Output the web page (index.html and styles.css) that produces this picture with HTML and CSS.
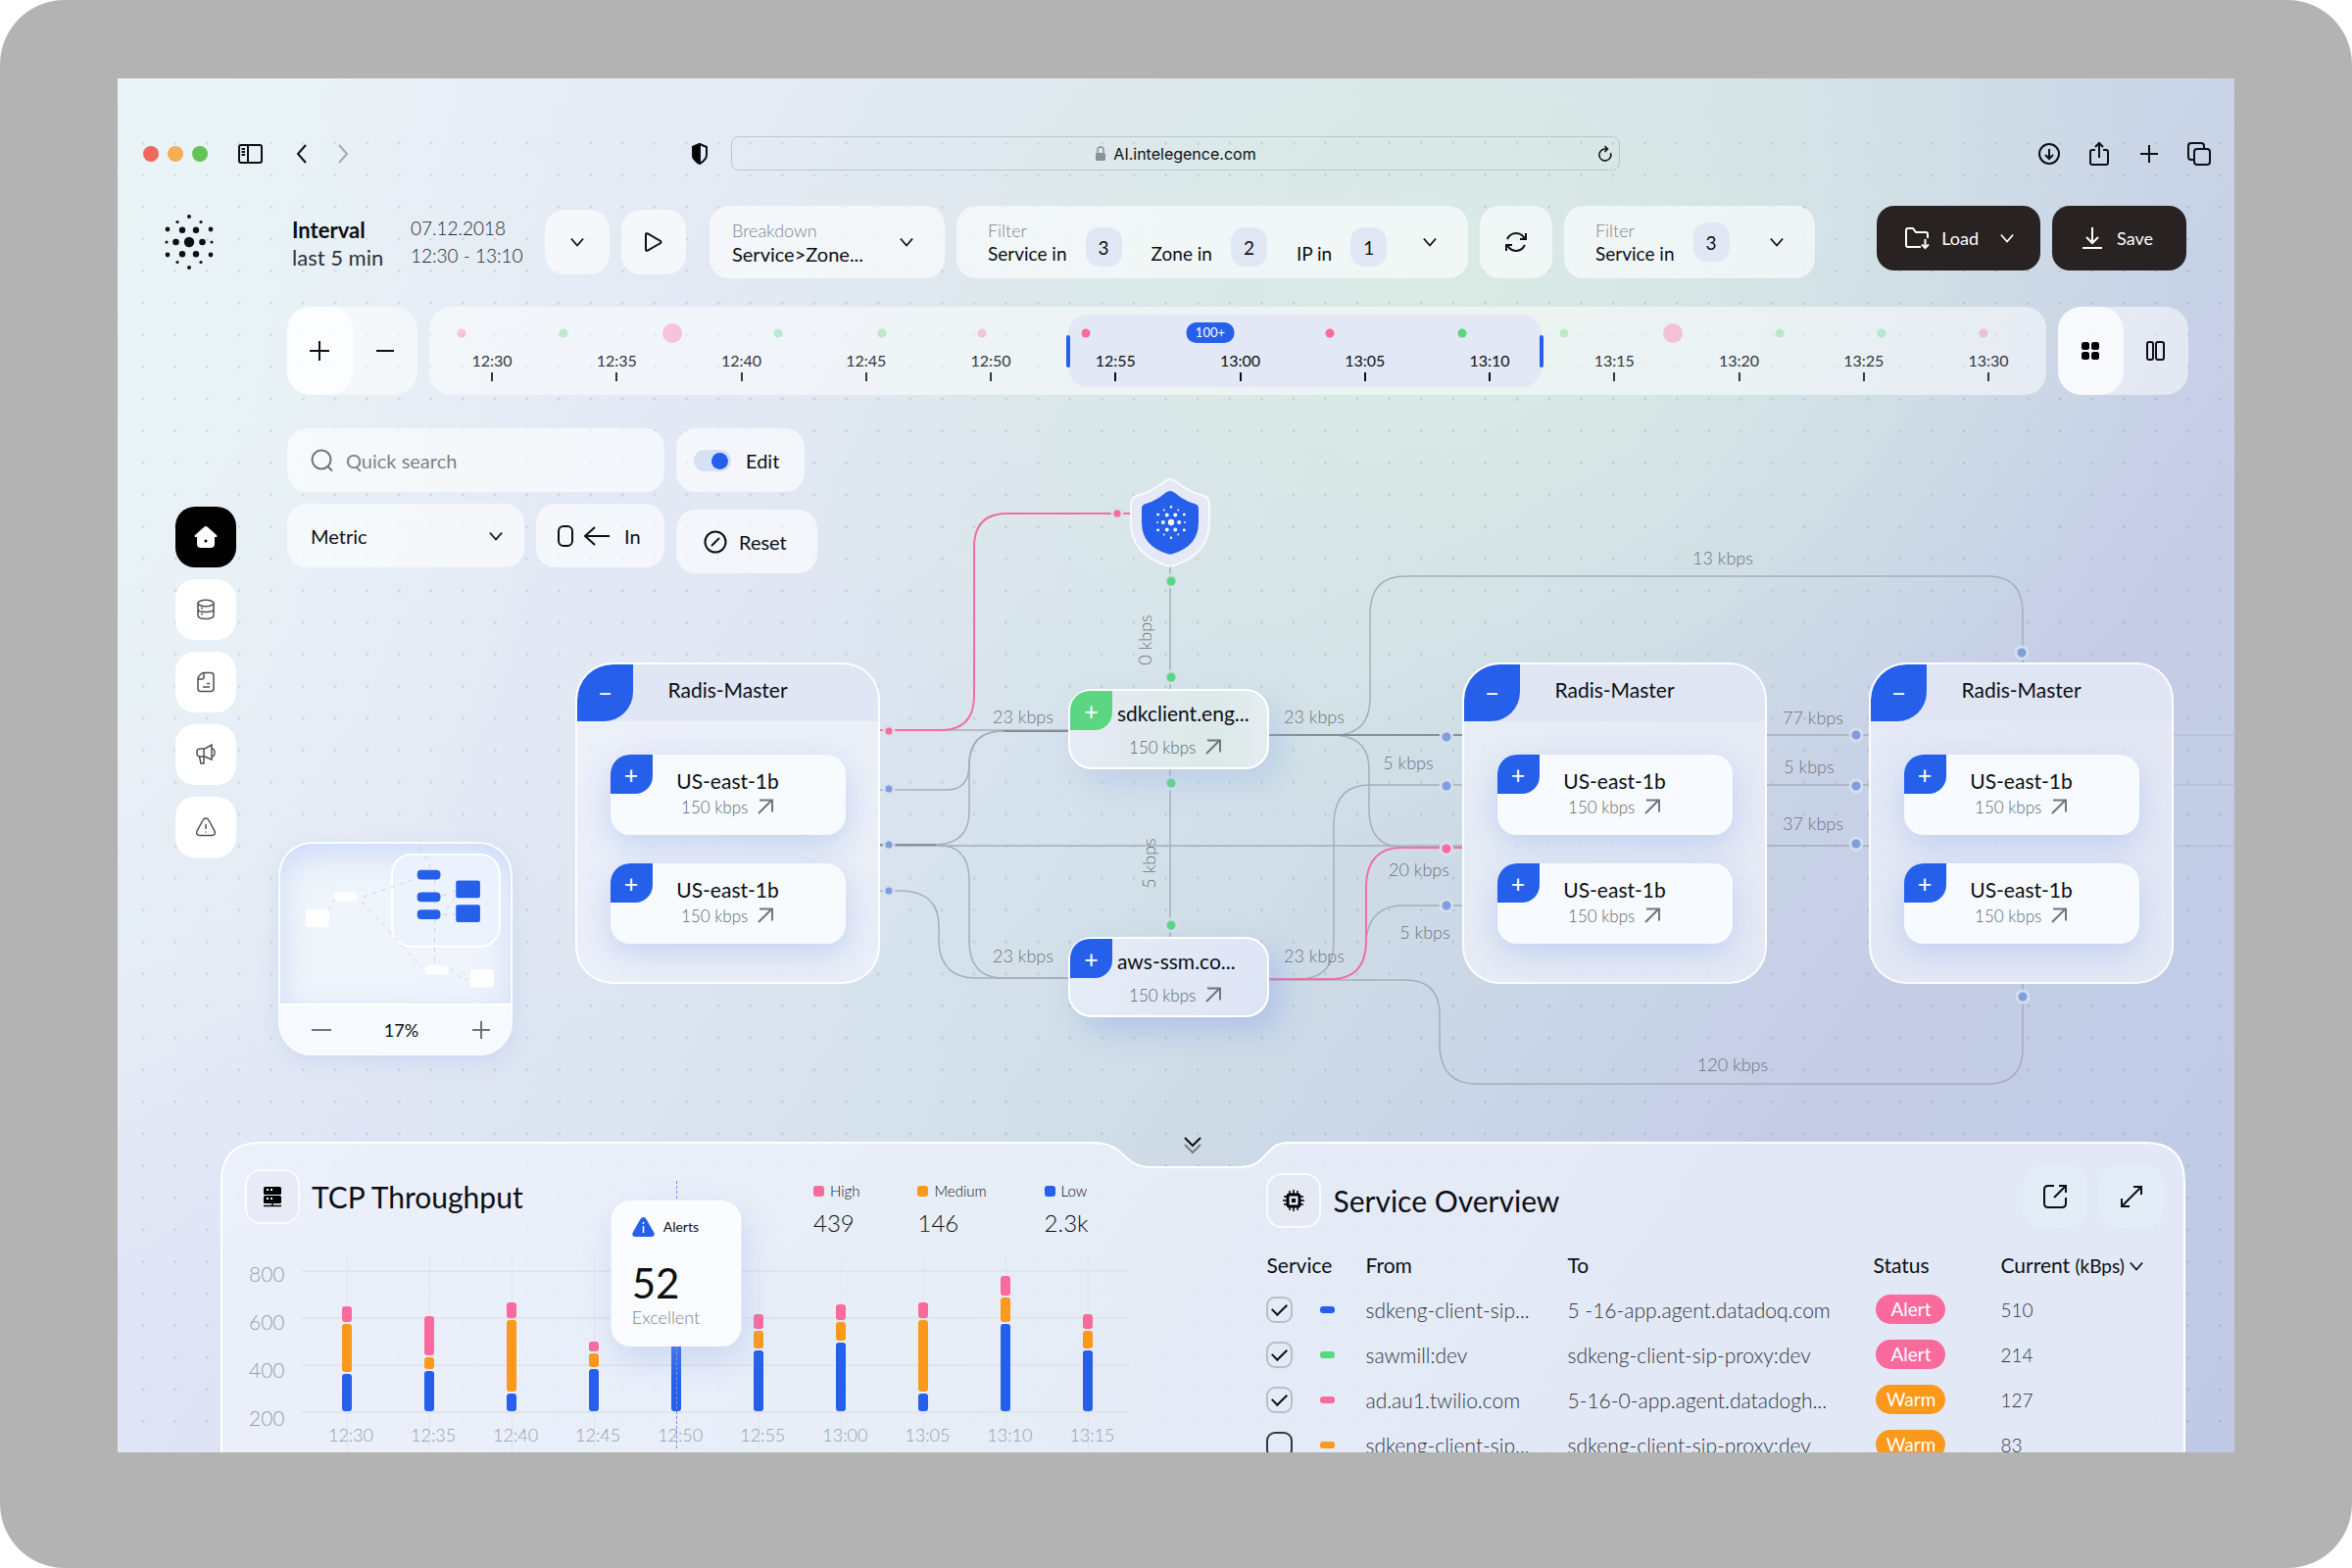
FILE: index.html
```html
<!DOCTYPE html>
<html lang="en">
  <head>
    <meta charset="UTF-8" />
    <meta name="viewport" content="width=device-width, initial-scale=1.0" />
    <title>AI Intelegence</title>
    <link rel="stylesheet" href="styles.css" />
  </head>
  <body>
    <svg class="sprite" aria-hidden="true">
      <symbol id="chevron" viewBox="0 0 16 16"><path d="M1 4l7 8 7-8" /></symbol>
      <symbol id="arrow" viewBox="0 0 18 18"><path d="M2 16L15 3M3 2.500h13v12" /></symbol>
      <symbol id="logo" viewBox="-28 -28 56 56">
        <circle r="5.200" />
        <circle cx="-13.500" r="3.300" /><circle cx="13.500" r="3.300" />
        <circle cx="-7" cy="-12.300" r="3.200" /><circle cx="7" cy="-12.300" r="3.200" />
        <circle cx="-7" cy="12.300" r="3.200" /><circle cx="7" cy="12.300" r="3.200" />
        <circle cx="-23" r="1.500" /><circle cx="23" r="1.500" />
        <circle cx="-22" cy="-13" r="2.400" /><circle cx="22" cy="-13" r="2.400" />
        <circle cx="-22" cy="13" r="2.400" /><circle cx="22" cy="13" r="2.400" />
        <circle cx="-12" cy="-20.500" r="1.600" /><circle cx="12" cy="-20.500" r="1.600" />
        <circle cx="-12" cy="20.500" r="1.600" /><circle cx="12" cy="20.500" r="1.600" />
        <circle cy="-26" r="2" /><circle cy="26" r="2" />
      </symbol>
    </svg>

    <div class="screen">
      <!-- network map -->
      <div class="canvas">
        <svg class="edges" width="2160" height="1402" viewBox="120 80 2160 1402">
          <defs>
            <pattern id="dots" x="130" y="130" width="32.6" height="32.6" patternUnits="userSpaceOnUse">
              <circle cx="16.300" cy="16.300" r="1.300" />
            </pattern>
          </defs>
          <rect class="grid-dots" x="120" y="130" width="2160" height="1352" fill="url(#dots)" />
          <g class="edge">
            <path d="M960 745H1091" />
            <path d="M897 806H966Q989 806 989 780Q990 746 1024 746H1091" />
            <path d="M897 862H955Q989 861 989 828V780Q989 746 1024 746H1091" />
            <path d="M897 862H955Q989 862 989 898V962Q990 998 1024 998H1091" />
            <path d="M897 909H922Q958 911 958 945V962Q960 998 996 998H1091" />
            <path d="M897 863H1492" />
            <path d="M1294 750H1492" />
            <path d="M1294 750H1362Q1398 750 1398 712V625Q1399 588 1434 588H2028Q2064 588 2064 625V676" />
            <path d="M1294 750H1362Q1397 752 1397 785V830Q1399 864 1430 864" />
            <path d="M1330 999Q1361 996 1361 962V838Q1363 801 1398 801H1492" />
            <path d="M1394 958Q1398 924 1432 924H1492" />
            <path d="M1294 1000H1434Q1469 1000 1469 1036V1070Q1472 1106 1506 1106H2028Q2064 1106 2064 1070V1004" />
            <path d="M1803 750H1907M1803 801H1907M1803 863H1907" />
            <path d="M1194 578V704M1194 784V958" />
          </g>
          <path class="edge faint" d="M2217 750H2280M2217 801H2280M2217 863H2280" />
          <path class="edge trunk" d="M1024 746H1091M897 862H955M1294 750H1362H1492" />
          <g class="edge hot">
            <path d="M897 745H960Q994 745 994 710V558Q994 524 1028 524H1154" />
            <path d="M1294 999H1358Q1394 999 1394 960V902Q1396 865 1430 865H1492" />
          </g>
          <g class="pin">
            <circle cx="907" cy="805" r="5" /><circle cx="907" cy="862" r="5" /><circle cx="907" cy="909" r="5" />
            <circle cx="1476" cy="752" r="6" /><circle cx="1476" cy="802" r="6" /><circle cx="1476" cy="924" r="6" />
            <circle cx="1894" cy="750" r="6" /><circle cx="1894" cy="802" r="6" /><circle cx="1894" cy="861" r="6" />
            <circle cx="2063" cy="666" r="6" /><circle cx="2064" cy="1017" r="6" />
          </g>
          <g class="pin pink">
            <circle cx="907" cy="746" r="5" /><circle cx="1140" cy="524" r="5" /><circle cx="1476" cy="866" r="6" />
          </g>
          <g class="pin green">
            <circle cx="1195" cy="593" r="6" /><circle cx="1195" cy="691" r="6" />
            <circle cx="1195" cy="799" r="6" /><circle cx="1195" cy="944" r="6" />
          </g>
          <g class="rate">
            <text x="1044" y="738">23 kbps</text>
            <text x="1341" y="738">23 kbps</text>
            <text x="1044" y="982">23 kbps</text>
            <text x="1341" y="982">23 kbps</text>
            <text x="1437" y="785">5 kbps</text>
            <text x="1448" y="894">20 kbps</text>
            <text x="1454" y="958">5 kbps</text>
            <text x="1850" y="739">77 kbps</text>
            <text x="1846" y="789">5 kbps</text>
            <text x="1850" y="847">37 kbps</text>
            <text x="1758" y="576">13 kbps</text>
            <text x="1768" y="1093">120 kbps</text>
            <text transform="translate(1175 653) rotate(-90)">0 kbps</text>
            <text transform="translate(1179 881) rotate(-90)">5 kbps</text>
          </g>
          <g transform="translate(1194 533)">
            <path class="shield-rim" d="M0-44Q3-44 8-40Q20-31 34-27Q40-25 40-19V0Q40 32 4 44Q0 45-4 44Q-40 32-40 0V-19Q-40-25-34-27Q-20-31-8-40Q-3-44 0-44Z" />
            <path class="shield" d="M0-32Q2-32 5-30Q14-22 25-19Q29-18 29-14V0Q29 24 3 32Q0 33-3 32Q-29 24-29 0V-14Q-29-18-25-19Q-14-22-5-30Q-2-32 0-32Z" />
            <use href="#logo" x="-16" y="-17" width="34" height="34" fill="#fff" />
          </g>
        </svg>

        <article class="group group-a">
          <header><button class="corner" aria-label="Collapse">−</button><h3>Radis-Master</h3></header>
          <div class="zone">
            <button class="corner" aria-label="Expand">+</button>
            <h4>US-east-1b</h4>
            <p>150 kbps <svg class="ico"><use href="#arrow" /></svg></p>
          </div>
          <div class="zone">
            <button class="corner" aria-label="Expand">+</button>
            <h4>US-east-1b</h4>
            <p>150 kbps <svg class="ico"><use href="#arrow" /></svg></p>
          </div>
        </article>
        <article class="group group-b">
          <header><button class="corner" aria-label="Collapse">−</button><h3>Radis-Master</h3></header>
          <div class="zone">
            <button class="corner" aria-label="Expand">+</button>
            <h4>US-east-1b</h4>
            <p>150 kbps <svg class="ico"><use href="#arrow" /></svg></p>
          </div>
          <div class="zone">
            <button class="corner" aria-label="Expand">+</button>
            <h4>US-east-1b</h4>
            <p>150 kbps <svg class="ico"><use href="#arrow" /></svg></p>
          </div>
        </article>
        <article class="group group-c">
          <header><button class="corner" aria-label="Collapse">−</button><h3>Radis-Master</h3></header>
          <div class="zone">
            <button class="corner" aria-label="Expand">+</button>
            <h4>US-east-1b</h4>
            <p>150 kbps <svg class="ico"><use href="#arrow" /></svg></p>
          </div>
          <div class="zone">
            <button class="corner" aria-label="Expand">+</button>
            <h4>US-east-1b</h4>
            <p>150 kbps <svg class="ico"><use href="#arrow" /></svg></p>
          </div>
        </article>
        <article class="zone node node-sdk">
          <button class="corner green" aria-label="Expand">+</button>
          <h4>sdkclient.eng...</h4>
          <p>150 kbps <svg class="ico"><use href="#arrow" /></svg></p>
        </article>
        <article class="zone node node-aws">
          <button class="corner" aria-label="Expand">+</button>
          <h4>aws-ssm.co...</h4>
          <p>150 kbps <svg class="ico"><use href="#arrow" /></svg></p>
        </article>
      </div>

      <!-- browser bar -->
      <div class="browser">
        <div class="lights"><i></i><i></i><i></i></div>
        <button class="plain" aria-label="Sidebar">
          <svg width="26" height="22" viewBox="0 0 26 22"><rect x="1" y="2" width="23" height="18" rx="2" /><path d="M10 2v18M3.500 6h3.500M3.500 9h3.500M3.500 12h3.500" /></svg>
        </button>
        <button class="plain back" aria-label="Back"><svg width="12" height="20" viewBox="0 0 12 20"><path d="M10 1L2 10l8 9" /></svg></button>
        <button class="plain forward" aria-label="Forward"><svg width="12" height="20" viewBox="0 0 12 20"><path d="M2 1l8 9-8 9" /></svg></button>
        <svg class="privacy" width="18" height="22" viewBox="0 0 18 22"><path d="M9 1l7 3v8q0 5-7 9-7-4-7-9V4z" /><path d="M9 1L2 4v8q0 5 7 9z" fill="#000" /></svg>
        <div class="url">
          <svg width="12" height="16" viewBox="0 0 12 16"><path d="M3 7V4q0-3 3-3t3 3v3" fill="none" stroke="#8b9199" stroke-width="1.500" /><rect x="1" y="7" width="10" height="8" rx="1.500" fill="#8b9199" /></svg>
          <span>AI.intelegence.com</span>
          <button class="plain reload" aria-label="Reload"><svg width="16" height="18" viewBox="0 0 16 18"><path d="M13.500 8A6 6 0 1 1 8 4h2M7.500 1l3 3-3 3" stroke-width="1.500" /></svg></button>
        </div>
        <div class="browser-actions">
          <button class="plain" aria-label="Downloads"><svg width="24" height="24" viewBox="0 0 24 24"><circle cx="12" cy="12" r="10" /><path d="M12 7v10M8 13l4 4 4-4" /></svg></button>
          <button class="plain" aria-label="Share"><svg width="24" height="26" viewBox="0 0 24 26"><path d="M8 9H5q-2 0-2 2v11q0 2 2 2h14q2 0 2-2V11q0-2-2-2h-3M12 17V2M8 6l4-4 4 4" /></svg></button>
          <button class="plain" aria-label="New tab"><svg width="24" height="24" viewBox="0 0 24 24"><path d="M12 3v18M3 12h18" /></svg></button>
          <button class="plain" aria-label="Tabs"><svg width="24" height="24" viewBox="0 0 24 24"><rect x="7" y="7" width="16" height="16" rx="3" /><path d="M7 18H4q-3 0-3-3V4q0-3 3-3h10q3 0 3 3v3" /></svg></button>
        </div>
      </div>

      <!-- toolbar -->
      <div class="toolbar">
        <a class="logo" href="#" aria-label="Home"><svg width="56" height="56"><use href="#logo" /></svg></a>
        <div class="interval"><b>Interval</b><span>last 5 min</span></div>
        <div class="dates"><span>07.12.2018</span><span>12:30 - 13:10</span></div>
        <button class="tile small" aria-label="Choose interval"><svg class="chev"><use href="#chevron" /></svg></button>
        <button class="tile small" aria-label="Play"><svg width="22" height="22" viewBox="0 0 22 22"><path d="M3 3.500v15q0 2 2 1l13-7.500q1-1 0-2L5 2.500q-2-1-2 1z" /></svg></button>
        <div class="tile breakdown">
          <div class="field">
            <label for="breakdown">Breakdown</label>
            <select id="breakdown"><option>Service&gt;Zone...</option></select>
          </div>
          <svg class="chev"><use href="#chevron" /></svg>
        </div>
        <button class="tile filter filter-main">
          <span class="field"><small>Filter</small><span>Service in</span></span><span class="count">3</span>
          <span class="field second"><span>Zone in</span></span><span class="count">2</span>
          <span class="field second"><span>IP in</span></span><span class="count">1</span>
          <svg class="chev"><use href="#chevron" /></svg>
        </button>
        <button class="tile refresh" aria-label="Refresh"><svg width="28" height="24" viewBox="0 0 28 24"><path d="M5 9Q8 3 14 3q6 0 9 6M24 3v6h-6M23 15q-3 6-9 6-6 0-9-6M4 21v-6h6" /></svg></button>
        <button class="tile filter filter-side">
          <span class="field"><small>Filter</small><span>Service in</span></span><span class="count high">3</span>
          <svg class="chev"><use href="#chevron" /></svg>
        </button>
        <button class="dark load">
          <svg width="26" height="24" viewBox="0 0 26 24"><path d="M17 21H4q-2 0-2-2V4q0-2 2-2h5l3 4h10q2 0 2 2v4M21.500 13v9M18 18.500l3.500 3.500 3.500-3.500" /></svg>
          Load
          <svg class="chev"><use href="#chevron" /></svg>
        </button>
        <button class="dark">
          <svg width="22" height="24" viewBox="0 0 22 24"><path d="M11 1v15M5 11l6 6 6-6M1 22h20" /></svg>
          Save
        </button>
      </div>

      <!-- timeline -->
      <div class="timeline-row">
        <div class="switch">
          <button class="on" aria-label="Zoom in"><svg width="22" height="22" viewBox="0 0 22 22"><path d="M11 1v20M1 11h20" /></svg></button>
          <button aria-label="Zoom out"><svg width="22" height="22" viewBox="0 0 22 22"><path d="M2 11h18" /></svg></button>
        </div>
        <div class="timeline">
          <div class="selection"></div>
          <i class="event pink" style="left: 2%"></i>
          <i class="event green" style="left: 8.3%"></i>
          <i class="event pink big" style="left: 15%"></i>
          <i class="event green" style="left: 21.6%"></i>
          <i class="event green" style="left: 28%"></i>
          <i class="event pink" style="left: 34.2%"></i>
          <i class="event pink live" style="left: 40.6%"></i>
          <span class="more" style="left: 48.3%">100+</span>
          <i class="event pink live" style="left: 55.7%"></i>
          <i class="event green live" style="left: 63.9%"></i>
          <i class="event green" style="left: 70.2%"></i>
          <i class="event pink big" style="left: 76.9%"></i>
          <i class="event green" style="left: 83.5%"></i>
          <i class="event green" style="left: 89.8%"></i>
          <i class="event pink" style="left: 96.1%"></i>
          <ol class="ticks">
            <li>12:30</li><li>12:35</li><li>12:40</li><li>12:45</li><li>12:50</li>
            <li class="in">12:55</li><li class="in">13:00</li><li class="in">13:05</li><li class="in">13:10</li>
            <li>13:15</li><li>13:20</li><li>13:25</li><li>13:30</li>
          </ol>
        </div>
        <div class="switch">
          <button class="on" aria-label="Grid view"><svg class="solid" width="20" height="20" viewBox="0 0 20 20"><rect x="1" y="1" width="8" height="8" rx="2.500" /><rect x="11" y="1" width="8" height="8" rx="2.500" /><rect x="1" y="11" width="8" height="8" rx="2.500" /><rect x="11" y="11" width="8" height="8" rx="2.500" /></svg></button>
          <button aria-label="Column view"><svg width="20" height="20" viewBox="0 0 20 20"><rect x="1" y="1" width="6" height="18" rx="2" /><rect x="10" y="1" width="8" height="18" rx="2" /></svg></button>
        </div>
      </div>

      <div class="workspace">
        <nav class="side">
          <a class="active" href="#" aria-label="Home"><svg width="26" height="26" viewBox="0 0 26 26"><path d="M13 2q1 0 2 1l9 8q1 1 0 2h-2v7q0 4-4 4H8q-4 0-4-4v-7H2q-1-1 0-2l9-8q1-1 2-1z" fill="#fff" stroke="none" /><circle cx="13" cy="17" r="1.500" fill="#000" stroke="none" /></svg></a>
          <a href="#" aria-label="Data"><svg width="22" height="22" viewBox="0 0 22 22"><ellipse cx="11" cy="4.500" rx="8" ry="3.200" /><path d="M3 4.500v12q0 4 8 4t8-4v-12M3 10.500q0 3 8 3t8-3M6 9.500h2M6 15.500h2" /></svg></a>
          <a href="#" aria-label="Reports"><svg width="22" height="22" viewBox="0 0 22 22"><path d="M9 1.500h7q3 0 3 3v13q0 3-3 3H6q-3 0-3-3V8q0-3 3-5 1-1.500 3-1.500zM9 2v4q0 2-2 2H3M8 16h7M12 12.500h3" /></svg></a>
          <a href="#" aria-label="Announcements"><svg width="22" height="22" viewBox="0 0 22 22"><path d="M2 8q0-3 4-3h4l7-4v15l-7-3H6q-4 0-4-3zM9 5v8M17 5q3 0 3 4t-3 4M4.500 13l1.500 7h3v-7" /></svg></a>
          <a href="#" aria-label="Alerts"><svg width="22" height="22" viewBox="0 0 22 22"><path d="M11 2q2 0 3 2l6 11q1.500 4.500-3 4.500H5q-4.500 0-3-4.500L8 4q1-2 3-2zM11 8v5M11 15.500v1" /></svg></a>
        </nav>
        <div class="left-tools">
          <div class="tools">
            <div class="tools-col">
              <label class="tile search"><svg width="24" height="24" viewBox="0 0 24 24"><circle cx="11" cy="11" r="9.500" /><path d="M17 17.500l5 5" /></svg><input type="search" placeholder="Quick search" aria-label="Quick search" /></label>
              <div class="tools-line">
                <div class="tile metric">
                  <select aria-label="Metric"><option>Metric</option></select>
                  <svg class="chev"><use href="#chevron" /></svg>
                </div>
                <button class="tile direction"><svg width="54" height="24" viewBox="0 0 54 24"><rect x="1" y="2" width="14" height="20" rx="5" /><path d="M53 12H29M38 3l-10 9 10 9" /></svg>In</button>
              </div>
            </div>
            <div class="tools-col wide">
              <label class="tile edit"><input type="checkbox" checked /><span>Edit</span></label>
              <button class="tile reset"><svg width="24" height="24" viewBox="0 0 24 24"><circle cx="12" cy="12" r="10.500" /><path d="M8 16l8-8" /></svg>Reset</button>
            </div>
          </div>

          <div class="minimap">
            <svg width="237" height="165" viewBox="285 861 237 165">
              <rect class="lens" x="400" y="872" width="111" height="95" rx="20" />
              <path class="wires" d="M429 864l12 24M422 898l-52 18M334 930l8-14M369 921l62 68M444 898v88M460 989q8 12 18 12M452 915l14-6M452 934h14M456 929l12-16" />
              <g fill="#2660ea"><rect x="426" y="888" width="24" height="10" rx="4" /><rect x="426" y="911" width="24" height="10" rx="4" /><rect x="426" y="929" width="24" height="10" rx="4" /><rect x="466" y="899" width="25" height="18" rx="2" /><rect x="466" y="924" width="25" height="18" rx="2" /></g>
              <g fill="#fff"><rect x="340" y="911" width="24" height="9" rx="4" /><rect x="311" y="929" width="24" height="18" rx="2" /><rect x="434" y="987" width="24" height="9" rx="4" /><rect x="481" y="991" width="24" height="18" rx="2" /></g>
            </svg>
            <div class="zoom-bar">
              <button aria-label="Zoom out"><svg width="20" height="20" viewBox="0 0 20 20"><path d="M0 10h20" /></svg></button>
              <span>17%</span>
              <button aria-label="Zoom in"><svg width="20" height="20" viewBox="0 0 20 20"><path d="M10 1v18M1 10h18" /></svg></button>
            </div>
          </div>
        </div>
      </div>

      <!-- bottom sheet -->
      <div class="sheet">
        <svg class="sheet-bg" viewBox="0 0 2006 360" preserveAspectRatio="none">
          <path d="M1 370V41Q1 1 41 1H890C925 1 920 26 950 26H1040C1070 26 1065 1 1090 1H1965Q2005 1 2005 41V370" />
        </svg>
        <button class="pull" aria-label="Collapse panel"><svg width="20" height="20" viewBox="0 0 20 20"><path d="M2 2l8 8 8-8" /><path d="M2 9l8 8 8-8" opacity=".45" /></svg></button>

        <section class="throughput">
          <header>
            <h2><span class="badge"><svg class="solid" width="22" height="22" viewBox="0 0 22 22"><rect x="2" y="1" width="18" height="8" rx="1.500" /><rect x="2" y="10" width="18" height="8" rx="1.500" /><path d="M2 20.500h18M11 18v3" stroke="#000" stroke-width="1.500" /><path d="M5 4h2M9 4h2M5 13h2M9 13h2" stroke="#fff" stroke-width="2" /></svg></span>TCP Throughput</h2>
            <dl class="legend">
              <div><dt class="high">High</dt><dd>439</dd></div>
              <div><dt class="medium">Medium</dt><dd>146</dd></div>
              <div><dt class="low">Low</dt><dd>2.3k</dd></div>
            </dl>
          </header>
          <div class="chart">
            <div class="y-axis"><span>800</span><span>600</span><span>400</span><span>200</span></div>
            <div class="plot">
              <div class="col"><div class="bar"><i class="high" style="height: 16px"></i><i class="medium" style="height: 49px"></i><i class="low" style="height: 38px"></i></div><span>12:30</span></div>
              <div class="col"><div class="bar"><i class="high" style="height: 40px"></i><i class="medium" style="height: 12px"></i><i class="low" style="height: 41px"></i></div><span>12:35</span></div>
              <div class="col"><div class="bar"><i class="high" style="height: 16px"></i><i class="medium" style="height: 73px"></i><i class="low" style="height: 18px"></i></div><span>12:40</span></div>
              <div class="col"><div class="bar"><i class="high" style="height: 10px"></i><i class="medium" style="height: 14px"></i><i class="low" style="height: 43px"></i></div><span>12:45</span></div>
              <div class="col current">
                <div class="bar"><i class="low" style="height: 78px"></i></div><span>12:50</span>
                <div class="tip">
                  <p><svg width="24" height="22" viewBox="0 0 24 22"><path d="M12 1q2 0 3 2l8 14q1 4-3 4H4q-4 0-3-4L9 3q1-2 3-2z" fill="#2660ea" /><path d="M12 6v2M12 10v7" stroke="#fff" stroke-width="1.500" /></svg>Alerts</p>
                  <strong>52</strong>
                  <small>Excellent</small>
                </div>
              </div>
              <div class="col"><div class="bar"><i class="high" style="height: 15px"></i><i class="medium" style="height: 18px"></i><i class="low" style="height: 62px"></i></div><span>12:55</span></div>
              <div class="col"><div class="bar"><i class="high" style="height: 16px"></i><i class="medium" style="height: 19px"></i><i class="low" style="height: 70px"></i></div><span>13:00</span></div>
              <div class="col"><div class="bar"><i class="high" style="height: 16px"></i><i class="medium" style="height: 73px"></i><i class="low" style="height: 18px"></i></div><span>13:05</span></div>
              <div class="col"><div class="bar"><i class="high" style="height: 20px"></i><i class="medium" style="height: 25px"></i><i class="low" style="height: 89px"></i></div><span>13:10</span></div>
              <div class="col"><div class="bar"><i class="high" style="height: 15px"></i><i class="medium" style="height: 18px"></i><i class="low" style="height: 62px"></i></div><span>13:15</span></div>
            </div>
          </div>
        </section>

        <section class="overview">
          <header>
            <h2><span class="badge"><svg width="22" height="22" viewBox="0 0 22 22"><g stroke="#000"><rect x="5" y="5" width="12" height="12" rx="2" stroke-width="3" /><rect x="9.500" y="9.500" width="3" height="3" fill="#000" /><path d="M7 1v4M11 0v5M15 1v4M7 17v4M11 17v5M15 17v4M1 7h4M0 11h5M1 15h4M17 7h4M17 11h5M17 15h4" stroke-width="1.500" /></g></svg></span>Service Overview</h2>
            <div class="overview-actions">
              <button aria-label="Open"><svg width="26" height="26" viewBox="0 0 26 26"><path d="M12 2H6Q2 2 2 6v14q0 4 4 4h14q4 0 4-4v-6M12 14L24 2M17 2h7v7" /></svg></button>
              <button aria-label="Full screen"><svg width="24" height="24" viewBox="0 0 24 24"><path d="M2 22L22 2M14 2h8v8M2 14v8h8" /></svg></button>
            </div>
          </header>
          <table>
            <thead>
              <tr><th class="c-service">Service</th><th class="c-from">From</th><th class="c-to">To</th><th class="c-status">Status</th><th>Current <small>(kBps)</small> <svg class="chev"><use href="#chevron" /></svg></th></tr>
            </thead>
            <tbody>
              <tr><td><label class="pick"><input type="checkbox" aria-label="sdkeng-client-sip" checked /><i class="low"></i></label></td><td>sdkeng-client-sip...</td><td>5 -16-app.agent.datadoq.com</td><td><span class="pill alert">Alert</span></td><td class="num">510</td></tr>
              <tr><td><label class="pick"><input type="checkbox" aria-label="sawmill:dev" checked /><i class="ok"></i></label></td><td>sawmill:dev</td><td>sdkeng-client-sip-proxy:dev</td><td><span class="pill alert">Alert</span></td><td class="num">214</td></tr>
              <tr><td><label class="pick"><input type="checkbox" aria-label="ad.au1.twilio.com" checked /><i class="high"></i></label></td><td>ad.au1.twilio.com</td><td>5-16-0-app.agent.datadogh...</td><td><span class="pill warm">Warm</span></td><td class="num">127</td></tr>
              <tr><td><label class="pick"><input type="checkbox" aria-label="sdkeng-client-sip" /><i class="medium"></i></label></td><td>sdkeng-client-sip...</td><td>sdkeng-client-sip-proxy:dev</td><td><span class="pill warm">Warm</span></td><td class="num">83</td></tr>
            </tbody>
          </table>
        </section>
      </div>
    </div>
  </body>
</html>
```

FILE: styles.css
```css
* {
  margin: 0;
  padding: 0;
  box-sizing: border-box;
}

html {
  background: #fff;
}

body {
  height: 100vh;
  padding: 80px 120px 118px;
  background: #b3b3b3;
  border-radius: 66px;
  overflow: hidden;
  font-family: Lato, "Open Sans", sans-serif;
  font-size: 20px;
  color: #0c0f14;
}

button,
input,
select {
  font: inherit;
  color: inherit;
  border: none;
  background: none;
}

button {
  cursor: pointer;
}

svg {
  flex: none;
  fill: none;
  stroke: none;
}

ol {
  list-style: none;
}

.sprite {
  position: absolute;
  width: 0;
  height: 0;
}

.screen {
  position: relative;
  height: 100%;
  overflow: hidden;
  display: flex;
  flex-direction: column;
  background:
    radial-gradient(ellipse 760px 560px at 62% 16%, rgba(218, 235, 228, 0.95), rgba(218, 235, 228, 0) 100%),
    radial-gradient(ellipse 460px 1100px at 0% 10%, rgba(234, 244, 245, 0.9), rgba(234, 244, 245, 0) 100%),
    radial-gradient(ellipse 900px 600px at 10% 100%, rgba(221, 227, 246, 0.9), rgba(221, 227, 246, 0) 100%),
    linear-gradient(125deg, #e8f1f6 0%, #e2e8f4 30%, #d0dfe7 54%, #c5cde6 78%, #c0cae6 100%);
}

.chev {
  width: 14px;
  height: 14px;
  stroke: currentColor;
  stroke-width: 2;
}

/* browser bar */
.browser {
  position: relative;
  flex: none;
  display: flex;
  align-items: center;
  height: 35px;
  margin-top: 59px;
  padding: 0 24px 0 26px;
}

.lights {
  display: flex;
  gap: 9px;
  margin-right: 31px;
}

.lights i {
  width: 16px;
  height: 16px;
  border-radius: 50%;
  background: #ec6a5f;
}

.lights i:nth-child(2) {
  background: #f4ae55;
}

.lights i:nth-child(3) {
  background: #62c454;
}

.plain {
  display: flex;
}

.plain svg,
.privacy {
  stroke: #0c0f14;
  stroke-width: 2;
}

.back {
  margin-left: 33px;
}

.forward {
  margin-left: 30px;
  opacity: 0.3;
}

.privacy {
  margin-left: 349px;
}

.url {
  position: relative;
  flex: 1;
  display: flex;
  align-items: center;
  justify-content: center;
  gap: 7px;
  height: 35px;
  margin: 0 603px 0 23px;
  border: 1px solid #bcc6d0;
  border-radius: 8px;
  font-family: Inter, sans-serif;
  font-size: 16px;
}

.reload {
  position: absolute;
  right: 6px;
}

.browser-actions {
  position: absolute;
  right: 24px;
  display: flex;
  align-items: center;
  gap: 27px;
}

/* toolbar */
.toolbar {
  position: relative;
  flex: none;
  display: flex;
  align-items: center;
  height: 74px;
  margin: 36px 49px 0 45px;
}

.logo {
  margin-right: 77px;
  line-height: 0;
}

.logo svg {
  fill: #0c0f14;
}

.interval,
.dates {
  display: flex;
  flex-direction: column;
  line-height: 28px;
}

.interval {
  width: 121px;
  padding-top: 4px;
  font-size: 22px;
}

.interval span {
  color: #2d3239;
}

.dates {
  width: 126px;
  margin-right: 11px;
  font-size: 19px;
  font-weight: 300;
  white-space: nowrap;
  color: #23282f;
}

.tile {
  display: flex;
  align-items: center;
  background: rgba(255, 255, 255, 0.62);
  border-radius: 20px;
}

.tile svg {
  stroke: #0c0f14;
  stroke-width: 2;
}

.small {
  justify-content: center;
  width: 66px;
  height: 66px;
  margin-right: 12px;
}

.breakdown {
  width: 240px;
  height: 74px;
  margin: 0 12px;
  padding: 0 32px 0 23px;
}

.field {
  display: flex;
  flex-direction: column;
  text-align: left;
  line-height: 24px;
  white-space: nowrap;
}

.field label,
.field small {
  font-size: 18px;
  font-weight: 300;
  color: #7b828d;
}

.field.second {
  padding-top: 24px;
  margin-left: 30px;
}

.breakdown select {
  width: 150px;
  appearance: none;
}

.breakdown .chev,
.filter .chev {
  margin-left: auto;
}

.filter {
  height: 74px;
  padding: 0 32px;
  font-size: 19px;
}

.filter-main {
  width: 522px;
}

.filter-side {
  width: 256px;
}

.count {
  display: grid;
  place-items: center;
  width: 37px;
  height: 40px;
  margin: 10px 0 0 19px;
  background: #e2e7f5;
  border-radius: 14px;
}

.count.high {
  margin-top: 0;
}

.refresh {
  justify-content: center;
  width: 74px;
  height: 74px;
  margin: 0 12px;
}

.dark {
  display: flex;
  align-items: center;
  align-self: flex-start;
  gap: 14px;
  height: 66px;
  padding: 0 34px 0 30px;
  border-radius: 18px;
  background: #282322;
  color: #fff;
  font-size: 18px;
}

.dark svg {
  stroke: #fff;
  stroke-width: 2;
}

.load {
  margin: 0 12px 0 auto;
  padding: 0 27px 0 28px;
  gap: 12px;
}

.load .chev {
  margin-left: 10px;
}

/* timeline */
.timeline-row {
  position: relative;
  flex: none;
  display: flex;
  gap: 12px;
  height: 90px;
  margin: 29px 47px 0 173px;
}

.switch {
  display: flex;
  width: 133px;
  background: rgba(255, 255, 255, 0.5);
  border-radius: 24px;
}

.switch button {
  flex: 1;
  display: grid;
  place-items: center;
  border-radius: 24px;
}

.switch svg {
  stroke: #0c0f14;
  stroke-width: 2;
}

.solid,
.switch .solid {
  fill: #000;
  stroke: none;
}

.switch .on {
  background: rgba(255, 255, 255, 0.7);
}

.timeline {
  position: relative;
  flex: 1;
  background: rgba(255, 255, 255, 0.5);
  border-radius: 22px;
}

.selection {
  position: absolute;
  left: 39.5%;
  width: 29.3%;
  top: 8px;
  bottom: 8px;
  background: #e2e8f5;
  border-radius: 20px;
}

.selection::before,
.selection::after {
  content: "";
  position: absolute;
  top: 21px;
  left: -2px;
  width: 4px;
  height: 33px;
  border-radius: 2px;
  background: #2660ea;
}

.selection::after {
  left: auto;
  right: -2px;
}

.event {
  position: absolute;
  top: 27px;
  width: 9px;
  height: 9px;
  border-radius: 50%;
  transform: translate(-50%, -50%);
  background: #fb6a9d;
  opacity: 0.35;
}

.event.green {
  background: #5bd784;
}

.event.big {
  width: 20px;
  height: 20px;
}

.event.live {
  opacity: 1;
}

.more {
  position: absolute;
  top: 16px;
  transform: translateX(-50%);
  width: 49px;
  height: 21px;
  border-radius: 10px;
  background: #2660ea;
  color: #fff;
  font-size: 13px;
  line-height: 21px;
  text-align: center;
}

.ticks {
  position: relative;
  display: flex;
  justify-content: space-between;
  padding: 44px 31px 0 36px;
  font-size: 16px;
  line-height: 22px;
  color: #33383f;
}

.ticks li {
  width: 56px;
  text-align: center;
}

.ticks li::after {
  content: "";
  display: block;
  width: 2px;
  height: 9px;
  margin: 1px auto 0;
  background: currentColor;
}

.ticks .in {
  color: #0c0f14;
}

/* workspace */
.workspace {
  flex: none;
  display: flex;
  height: 762px;
  padding: 34px 0 0 59px;
}

.side {
  position: relative;
  display: flex;
  flex-direction: column;
  gap: 12px;
  padding-top: 80px;
  width: 105px;
}

.side a {
  display: grid;
  place-items: center;
  width: 62px;
  height: 62px;
  border-radius: 20px;
  background: #fff;
}

.side svg {
  stroke: #4b5158;
  stroke-width: 1.5;
}

.side .active {
  background: #000;
}

.left-tools {
  position: relative;
  display: flex;
  flex-direction: column;
  justify-content: space-between;
  padding-bottom: 88px;
}

.tools {
  display: flex;
  gap: 12px;
  margin-left: 9px;
}

.tools-col {
  display: flex;
  flex-direction: column;
  gap: 12px;
  width: 385px;
}

.tools-col.wide {
  width: 144px;
  gap: 18px;
}

.tools .tile {
  height: 65px;
}

.tools-line {
  display: flex;
  gap: 12px;
}

.search {
  gap: 12px;
  padding: 0 24px;
}

.tile.search svg {
  stroke: #6d737c;
}

.search input {
  width: 100%;
  outline: none;
}

.search input::placeholder {
  color: #7b828d;
  opacity: 1;
}

.metric {
  flex: 1;
  padding: 0 22px 0 24px;
}

.metric select {
  flex: 1;
  appearance: none;
}

.direction {
  width: 131px;
  padding: 0 20px 0 22px;
  gap: 14px;
}

.edit {
  width: 131px;
  padding-left: 18px;
  gap: 15px;
}

.edit input {
  appearance: none;
  width: 38px;
  height: 22px;
  padding: 3px;
  border-radius: 11px;
  background: #d8e0f6;
}

.edit input::before {
  content: "";
  display: block;
  width: 17px;
  height: 17px;
  margin-left: auto;
  border-radius: 50%;
  background: #2660ea;
}

.reset {
  padding-left: 28px;
  gap: 12px;
}

.minimap {
  width: 239px;
  border: 2px solid rgba(255, 255, 255, 0.7);
  border-radius: 34px;
  overflow: hidden;
  background: rgba(243, 247, 253, 0.8);
  box-shadow: 0 6px 20px rgba(150, 175, 235, 0.25);
}

.minimap > svg {
  display: block;
  width: 100%;
  height: 163px;
  border-radius: 32px 32px 0 0;
  box-shadow: inset 0 12px 32px rgba(160, 186, 244, 0.45);
}

.lens {
  fill: rgba(236, 242, 253, 0.85);
  stroke: #fff;
  stroke-width: 2;
}

.wires {
  stroke: #cdd3de;
  stroke-dasharray: 5 5;
}

.zoom-bar {
  display: flex;
  align-items: center;
  justify-content: space-between;
  height: 51px;
  padding: 0 20px 0 32px;
  border-top: 2px solid #fff;
  background: rgba(246, 250, 253, 0.9);
  font-size: 18px;
}

.zoom-bar button {
  display: flex;
}

.zoom-bar svg {
  stroke: #6d737c;
  stroke-width: 2;
}

/* network map */
.canvas {
  position: absolute;
  inset: 0;
}

.edges {
  position: absolute;
  left: 0;
  top: 0;
}

.grid-dots {
  opacity: 0.16;
}

#dots circle {
  fill: #2c4258;
}

.edge {
  stroke: #a5aeb9;
  stroke-width: 1.5;
}

.trunk {
  stroke: #858d98;
  stroke-width: 2;
}

.faint {
  opacity: 0.4;
}

.hot {
  stroke: #f0709f;
  stroke-width: 2;
}

.pin {
  fill: #829ddb;
  stroke: rgba(215, 226, 240, 0.9);
  stroke-width: 3;
}

.pin.pink {
  fill: #fb6a9d;
}

.pin.green {
  fill: #5bd784;
}

.rate {
  fill: #6c737d;
  font-size: 18px;
  font-weight: 300;
  text-anchor: middle;
}

.shield-rim {
  fill: #e4e9f5;
  stroke: #f7f9fd;
  stroke-width: 2;
}

.shield {
  fill: #2660ea;
}

.group {
  position: absolute;
  top: 596px;
  width: 311px;
  border: 2px solid rgba(255, 255, 255, 0.9);
  border-radius: 38px;
  padding-bottom: 39px;
  overflow: hidden;
  background: rgba(240, 243, 251, 0.72);
}

.group-a {
  left: 467px;
}

.group-b {
  left: 1372px;
}

.group-c {
  left: 1787px;
}

.group header {
  display: grid;
  height: 58px;
  margin-bottom: 34px;
  background: rgba(223, 228, 242, 0.8);
}

.group h3 {
  font-size: 21px;
  font-weight: 400;
  line-height: 52px;
  text-align: center;
}

.corner {
  position: absolute;
  left: 0;
  top: 0;
  width: 43px;
  height: 40px;
  border-radius: 20px 0 18px 0;
  background: #2660ea;
  color: #fff;
  font-size: 25px;
  line-height: 36px;
}

header .corner {
  width: 57px;
  height: 58px;
  border-radius: 36px 0 30px 0;
  line-height: 54px;
}

.corner.green {
  background: #5bd784;
}

.zone {
  position: relative;
  width: 240px;
  height: 82px;
  margin: 0 auto 29px;
  padding-top: 13px;
  border-radius: 20px;
  background: rgba(248, 251, 254, 0.95);
  box-shadow: 0 10px 30px rgba(140, 170, 235, 0.4);
  text-align: center;
}

.zone:last-child {
  margin-bottom: 0;
}

.zone h4 {
  font-size: 21px;
  font-weight: 400;
  line-height: 27px;
}

.zone p {
  font-size: 17px;
  font-weight: 300;
  line-height: 28px;
  color: #60666f;
}

.ico {
  width: 18px;
  height: 18px;
  margin-left: 4px;
  vertical-align: -2px;
  stroke: #70767f;
  stroke-width: 2;
}

.node {
  position: absolute;
  left: 970px;
  width: 205px;
  border: 2px solid #fff;
  padding: 9px 0 0;
  margin: 0;
  border-radius: 24px;
  background: linear-gradient(90deg, #e6ebf5, #dce9e8 70%, #e4ecf0);
  box-shadow: 12px 14px 30px rgba(150, 175, 235, 0.35);
}

.node h4 {
  padding-left: 48px;
  text-align: left;
}

.node p {
  padding: 8px 0 0 14px;
}

.node-sdk {
  top: 623px;
}

.node-aws {
  top: 876px;
  background: linear-gradient(100deg, #e6ecf6, #dde4f5);
  box-shadow: 12px 14px 30px rgba(140, 165, 235, 0.45);
}

/* bottom sheet */
.sheet {
  position: relative;
  flex: none;
  display: grid;
  grid-template-columns: 902fr 915fr;
  gap: 140px;
  height: 360px;
  margin: 0 50px 0 105px;
  padding: 0 22px 0 25px;
}

.sheet-bg {
  position: absolute;
  inset: 0;
  width: 100%;
  height: 100%;
  fill: rgba(240, 244, 252, 0.7);
  stroke: #fff;
  stroke-width: 2;
}

.pull {
  position: absolute;
  left: 982px;
  top: -6px;
}

.pull svg {
  stroke: #0c0f14;
  stroke-width: 2;
}

.throughput,
.overview {
  position: relative;
}

.throughput {
  padding-top: 28px;
}

.throughput header {
  display: flex;
  justify-content: space-between;
  align-items: flex-start;
  height: 82px;
}

.sheet h2 {
  display: flex;
  align-items: center;
  gap: 12px;
  font-size: 30px;
  font-weight: 400;
}

.badge {
  display: grid;
  place-items: center;
  width: 56px;
  height: 56px;
  border: 2px solid rgba(255, 255, 255, 0.8);
  border-radius: 16px;
  background: rgba(226, 232, 244, 0.6);
}

.legend {
  display: flex;
  gap: 59px;
  padding: 10px 42px 0 0;
}

.legend dt {
  display: flex;
  align-items: center;
  gap: 6px;
  font-size: 15px;
  font-weight: 300;
  line-height: 24px;
}

.legend dt::before {
  content: "";
  width: 11px;
  height: 11px;
  border-radius: 3px;
}

.legend dd {
  font-size: 24px;
  font-weight: 300;
  line-height: 42px;
}

.bar .high,
.pick .high,
.legend .high::before {
  background: #fb6a9d;
}

.bar .medium,
.pick .medium,
.legend .medium::before {
  background: #fc981b;
}

.bar .low,
.pick .low,
.legend .low::before {
  background: #2660ea;
}

.pick .ok {
  background: #5bd784;
}

.chart {
  display: flex;
  font-weight: 300;
  color: #959fad;
}

.y-axis {
  width: 58px;
  padding-left: 4px;
  font-size: 21px;
}

.y-axis span {
  display: block;
  line-height: 49px;
}

.plot {
  flex: 1;
  display: flex;
  height: 167px;
  padding-left: 4px;
  font-size: 18px;
  background: linear-gradient(to top, #dfe4ee 2px, transparent 2px) 0 100% / 100% 48px;
}

.col {
  position: relative;
  flex: 1;
}

.col::before {
  content: "";
  position: absolute;
  left: 50%;
  top: 5px;
  height: 205px;
  width: 1px;
  background: #dfe4ee;
}

.bar {
  position: relative;
  display: flex;
  flex-direction: column;
  justify-content: flex-end;
  align-items: center;
  gap: 2px;
  height: 100%;
  padding-bottom: 2px;
}

.bar i {
  width: 10px;
  border-radius: 3px;
}

.col > span {
  display: block;
  position: relative;
  line-height: 26px;
  padding: 9px 0 0 8px;
  text-align: center;
}

.current::after {
  content: "";
  position: absolute;
  left: 50%;
  top: -70px;
  bottom: -36px;
  border-left: 1px dashed #6f92ee;
}

.tip {
  position: absolute;
  z-index: 1;
  left: 50%;
  bottom: 68px;
  width: 133px;
  height: 149px;
  padding: 14px 21px;
  transform: translateX(-50%);
  border-radius: 20px;
  background: #fafcff;
  box-shadow: 4px 14px 30px rgba(150, 175, 230, 0.35);
  color: #0c0f14;
}

.tip p {
  display: flex;
  align-items: center;
  gap: 8px;
  font-size: 14px;
  font-weight: 400;
  line-height: 26px;
}

.tip strong {
  display: block;
  margin-top: 20px;
  font-size: 42px;
  font-weight: 400;
  line-height: 48px;
}

.tip small {
  display: block;
  font-size: 18px;
  line-height: 22px;
  color: #7b828d;
}

.overview {
  padding-top: 24px;
}

.overview header {
  display: flex;
  justify-content: space-between;
  align-items: flex-end;
  height: 64px;
  margin-bottom: 14px;
}

.overview-actions {
  display: flex;
  gap: 12px;
}

.overview-actions button {
  display: grid;
  place-items: center;
  width: 66px;
  height: 64px;
  border-radius: 20px;
  background: rgba(228, 238, 248, 0.8);
}

.overview-actions svg {
  stroke: #0c0f14;
  stroke-width: 2;
}

table {
  width: 100%;
  table-layout: fixed;
  border-collapse: collapse;
}

th,
td {
  height: 46px;
  font-size: 21px;
  text-align: left;
  white-space: nowrap;
}

th {
  font-weight: 400;
}

th small {
  font-size: 19px;
}

td {
  font-weight: 300;
  color: #2f353c;
}

.num {
  font-size: 19px;
}

.c-service {
  width: 101px;
}

.c-from {
  width: 206px;
}

.c-to {
  width: 312px;
}

.c-status {
  width: 130px;
}

.pick {
  display: flex;
  align-items: center;
  gap: 28px;
}

.pick input {
  display: grid;
  place-items: center;
  appearance: none;
  width: 27px;
  height: 27px;
  border: 2px solid #33383f;
  border-radius: 9px;
}

.pick input:checked {
  border-color: #b9bfc9;
}

.pick input:checked::before {
  content: "";
  width: 13px;
  height: 7px;
  margin-top: -4px;
  border: solid #0c0f14;
  border-width: 0 0 2px 2px;
  transform: rotate(-45deg);
}

.pick i {
  width: 15px;
  height: 7px;
  border-radius: 3px;
}

.pill {
  display: block;
  width: 71px;
  margin-left: 3px;
  border-radius: 15px;
  line-height: 30px;
  font-size: 19px;
  font-weight: 400;
  text-align: center;
  color: #fff;
}

.alert {
  background: #fb6a9d;
}

.warm {
  background: #fc981b;
}
```
